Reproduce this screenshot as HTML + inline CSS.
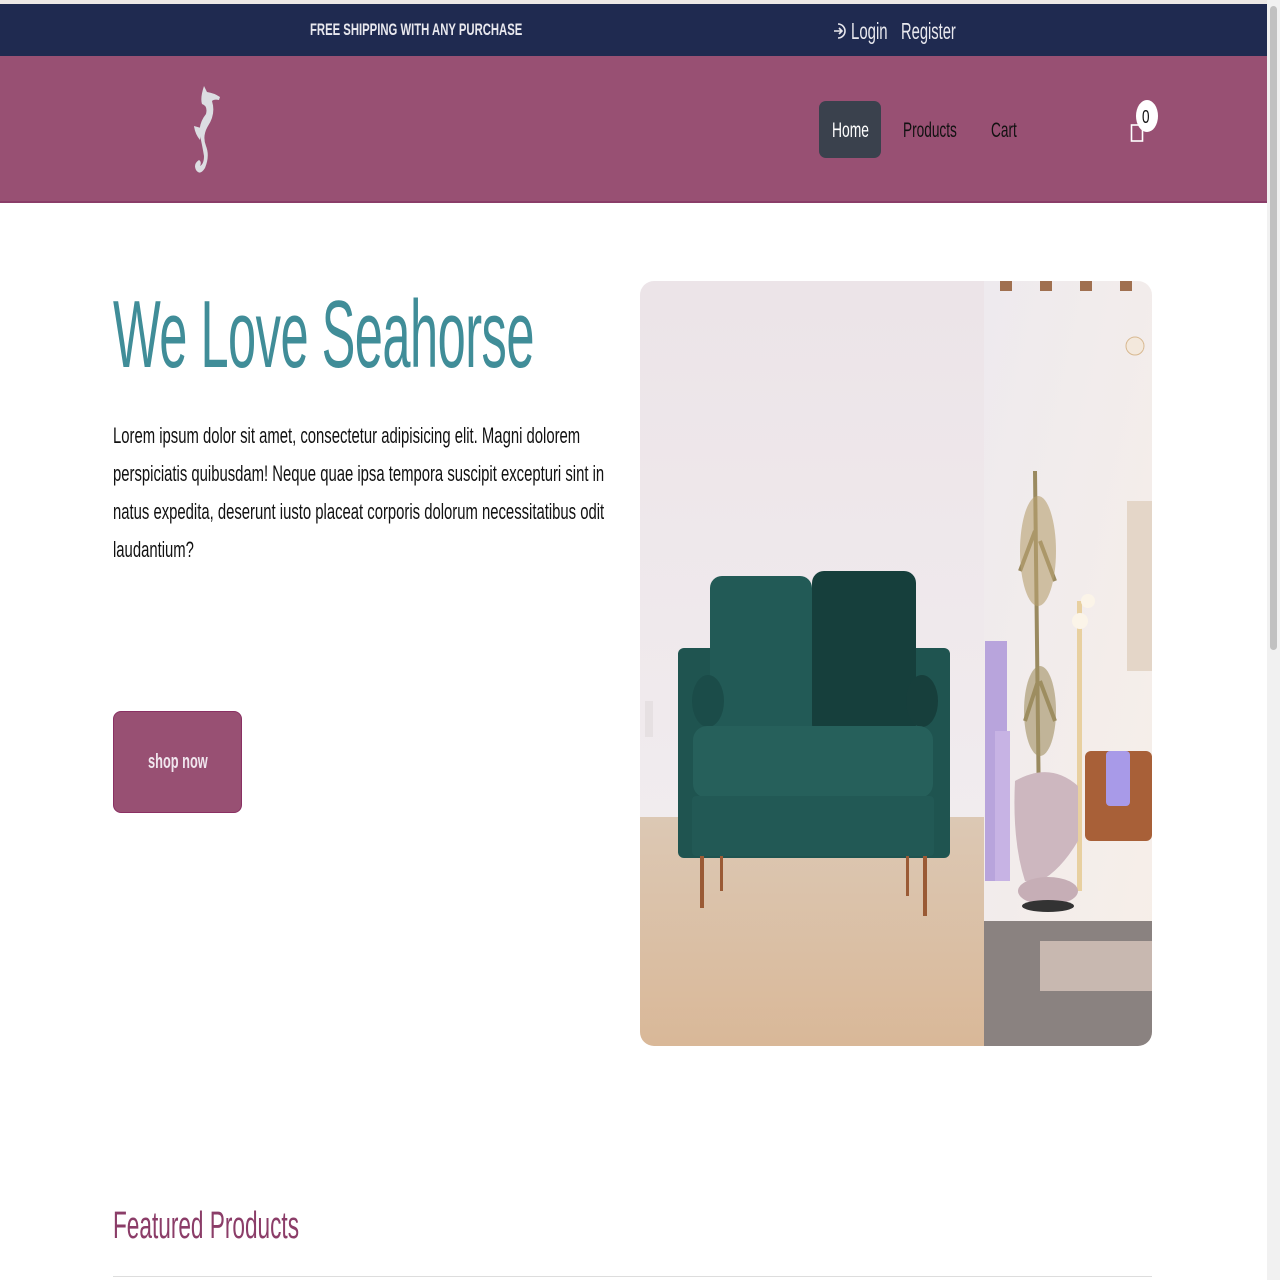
<!DOCTYPE html>
<html><head><meta charset="utf-8">
<style>
html,body{margin:0;padding:0;width:1280px;height:1280px;overflow:hidden;background:#fff;font-family:"Liberation Sans",sans-serif;}
.a{position:absolute;white-space:nowrap;transform-origin:0 0;}
</style></head><body>
<div style="position:absolute;left:0;top:0;width:1267px;height:4px;background:#ece8e6"></div>
<div style="position:absolute;left:0;top:4px;width:1267px;height:52px;background:#1f2a50"></div>
<div style="position:absolute;left:0;top:56px;width:1267px;height:145px;background:#985073;border-bottom:2px solid #8a3d68"></div>
<div style="position:absolute;left:1267px;top:0;width:13px;height:1280px;background:#f1f1f1"></div>
<div style="position:absolute;left:1270px;top:6px;width:7px;height:644px;background:#c1c1c1;border-radius:4px"></div>

<div class="a" style="left:310px;top:20px;font-size:17px;font-weight:bold;color:#e8e8ee;transform:scaleX(0.665)">FREE SHIPPING WITH ANY PURCHASE</div>
<svg class="a" style="left:833px;top:22px" width="14" height="18" viewBox="0 0 14 18"><path d="M5 2 A7 7 0 1 1 5 16" fill="none" stroke="#e8e8ee" stroke-width="1.6"/><path d="M1 9 H9 M6 6 L9 9 L6 12" fill="none" stroke="#e8e8ee" stroke-width="1.6"/></svg>
<div class="a" style="left:851px;top:18px;font-size:23px;color:#e8e8ee;transform:scaleX(0.65)">Login</div>
<div class="a" style="left:901px;top:18px;font-size:23px;color:#e8e8ee;transform:scaleX(0.64)">Register</div>

<svg class="a" style="left:188px;top:84px" width="36" height="92" viewBox="0 0 36 92">
<path d="M16 2 L19 8 Q26 9 32 13 L31 16 Q26 15 24 17 Q28 30 20 42 Q14 52 18 62 Q22 72 17 84 Q12 92 8 86 Q5 80 11 76 Q14 78 12 82 Q16 80 16 72 Q14 60 12 52 Q10 40 18 30 Q20 22 14 20 Q12 14 16 2Z" fill="#dcdde2"/>
<path d="M6 42 L13 44 L12 56 Q7 50 6 42Z" fill="#dcdde2"/>
</svg>

<div style="position:absolute;left:819px;top:101px;width:62px;height:57px;background:#3a414d;border-radius:7px"></div>
<div class="a" style="left:832px;top:119px;font-size:21px;color:#fff;transform:scaleX(0.66)">Home</div>
<div class="a" style="left:903px;top:119px;font-size:21px;color:#111;transform:scaleX(0.65)">Products</div>
<div class="a" style="left:991px;top:119px;font-size:21px;color:#111;transform:scaleX(0.65)">Cart</div>
<svg class="a" style="left:1130px;top:118px" width="14" height="26" viewBox="0 0 14 26"><rect x="1.5" y="7" width="11" height="16" fill="none" stroke="#fff" stroke-width="1.6"/></svg>
<div style="position:absolute;left:1136px;top:100px;width:22px;height:32px;border-radius:50%;background:#fff"></div>
<div class="a" style="left:1142px;top:107px;font-size:18px;color:#111;transform:scaleX(0.75)">0</div>

<div class="a" style="left:113px;top:280px;font-size:96px;color:#408d98;transform:scaleX(0.527);letter-spacing:-1px">We Love Seahorse</div>
<div class="a" style="left:113px;top:423px;font-size:22px;color:#111;transform:scaleX(0.675)">Lorem ipsum dolor sit amet, consectetur adipisicing elit. Magni dolorem</div>
<div class="a" style="left:113px;top:461px;font-size:22px;color:#111;transform:scaleX(0.675)">perspiciatis quibusdam! Neque quae ipsa tempora suscipit excepturi sint in</div>
<div class="a" style="left:113px;top:499px;font-size:22px;color:#111;transform:scaleX(0.675)">natus expedita, deserunt iusto placeat corporis dolorum necessitatibus odit</div>
<div class="a" style="left:113px;top:537px;font-size:22px;color:#111;transform:scaleX(0.675)">laudantium?</div>

<div style="position:absolute;left:113px;top:711px;width:127px;height:100px;background:#985073;border:1px solid #8a3063;border-radius:8px"></div>
<div class="a" style="left:148px;top:751px;font-size:20px;font-weight:bold;color:#f0e6ee;transform:scaleX(0.64)">shop now</div>

<svg class="a" style="left:640px;top:281px" width="512" height="765" viewBox="0 0 512 765">
<defs>
<clipPath id="r"><rect width="512" height="765" rx="14"/></clipPath>
<linearGradient id="wall" x1="0" y1="0" x2="0" y2="1"><stop offset="0" stop-color="#ece4e8"/><stop offset="1" stop-color="#f3eff1"/></linearGradient>
<linearGradient id="floor" x1="0" y1="0" x2="0" y2="1"><stop offset="0" stop-color="#dcc8b4"/><stop offset="1" stop-color="#d9b898"/></linearGradient>
<linearGradient id="wall2" x1="0" y1="0" x2="1" y2="1"><stop offset="0" stop-color="#eeeaee"/><stop offset="1" stop-color="#f7efe8"/></linearGradient>
</defs>
<g clip-path="url(#r)">
<rect width="344" height="765" fill="url(#wall)"/>
<rect y="536" width="344" height="229" fill="url(#floor)"/>
<rect x="5" y="420" width="8" height="36" fill="#e6e0e2"/>
<rect x="38" y="367" width="272" height="210" rx="6" fill="#1f5450"/>
<rect x="70" y="295" width="102" height="160" rx="12" fill="#225a56"/>
<rect x="172" y="290" width="104" height="165" rx="12" fill="#163f3c"/>
<ellipse cx="68" cy="420" rx="16" ry="26" fill="#1b4c49"/>
<ellipse cx="282" cy="420" rx="16" ry="26" fill="#173f3c"/>
<rect x="53" y="445" width="240" height="72" rx="14" fill="#26605b"/>
<rect x="52" y="515" width="242" height="60" rx="4" fill="#225955"/>
<rect x="60" y="575" width="4" height="52" fill="#9a5a35"/>
<rect x="80" y="575" width="3" height="35" fill="#9a5a35"/>
<rect x="266" y="575" width="3" height="40" fill="#9a5a35"/>
<rect x="283" y="575" width="4" height="60" fill="#9a5a35"/>
<rect x="344" width="168" height="765" fill="url(#wall2)"/>
<rect x="344" y="640" width="168" height="125" fill="#8a8280"/>
<rect x="400" y="660" width="112" height="50" fill="#c8b8b0"/>
<g fill="#a07050"><rect x="360" y="0" width="12" height="10"/><rect x="400" y="0" width="12" height="10"/><rect x="440" y="0" width="12" height="10"/><rect x="480" y="0" width="12" height="10"/></g>
<circle cx="495" cy="65" r="9" fill="#f3e8dc" stroke="#d8b890"/>
<path d="M395 190 L400 620 M395 250 L380 290 M400 260 L415 300 M398 400 L385 440 M400 400 L415 440" stroke="#9a8a60" stroke-width="4" fill="none"/>
<ellipse cx="398" cy="270" rx="18" ry="55" fill="#b8a070" opacity="0.6"/>
<ellipse cx="400" cy="430" rx="16" ry="45" fill="#a09060" opacity="0.6"/>
<rect x="345" y="360" width="22" height="240" fill="#b8a4dc"/>
<rect x="355" y="450" width="15" height="150" fill="#c7b3e4"/>
<rect x="487" y="220" width="25" height="170" fill="#e4d6c8"/>
<rect x="437" y="320" width="5" height="290" fill="#e8d0a0"/>
<circle cx="440" cy="340" r="8" fill="#fbf4e8"/>
<circle cx="448" cy="320" r="7" fill="#fbf4e8"/>
<rect x="445" y="470" width="67" height="90" rx="6" fill="#a86038"/>
<rect x="466" y="470" width="24" height="55" rx="4" fill="#a89ae8"/>
<path d="M375 500 Q410 480 438 505 L438 560 Q420 590 400 600 L385 600 Q372 560 375 500Z" fill="#cdb7bf"/>
<ellipse cx="408" cy="610" rx="30" ry="14" fill="#c6aeb6"/>
<ellipse cx="408" cy="625" rx="26" ry="6" fill="#333"/>
</g>
</svg>

<div class="a" style="left:113px;top:1205px;font-size:38px;color:#8b3d68;transform:scaleX(0.595)">Featured Products</div>
<div style="position:absolute;left:113px;top:1276px;width:1039px;height:1px;background:#ddd"></div>
</body></html>
